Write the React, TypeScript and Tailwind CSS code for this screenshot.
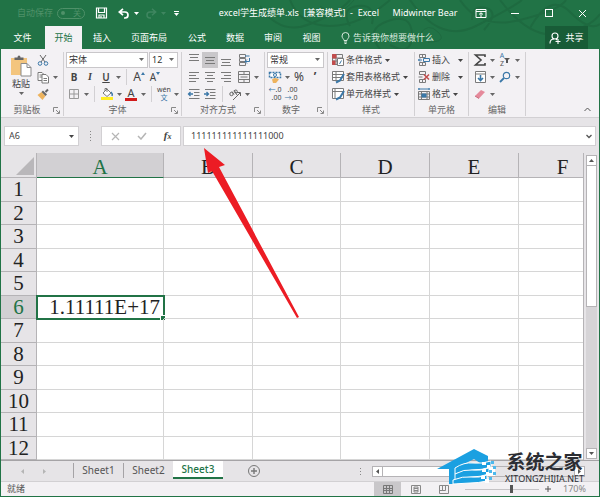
import React, { useState } from "react";

const menuTabs = [
  { label: "文件", width: "w-[45px]" },
  { label: "开始", width: "w-[37px]" },
  { label: "插入", width: "w-[40px]" },
  { label: "页面布局", width: "w-[54px]" },
  { label: "公式", width: "w-[42px]" },
  { label: "数据", width: "w-[34px]" },
  { label: "审阅", width: "w-[42px]" },
  { label: "视图", width: "w-[35px]" },
];

const columns = ["A", "B", "C", "D", "E", "F"];
const rows = Array.from({ length: 12 }, (_, i) => i + 1);
const cells: Record<string, string> = { A6: "1.11111E+17" };
const sheets = ["Sheet1", "Sheet2", "Sheet3"];

function Caret() {
  return (
    <svg width="5" height="3" viewBox="0 0 5 3" fill="currentColor" className="shrink-0">
      <path d="M0 0h5L2.5 3z" />
    </svg>
  );
}

function CaretCell() {
  return (
    <span className="flex w-2 shrink-0 items-center justify-center text-[#666]">
      <Caret />
    </span>
  );
}

function Divider() {
  return <span className="mx-1 h-4 w-px shrink-0 bg-[#d2d0d3]" />;
}

interface ToolProps {
  label: string;
  active?: boolean;
  children: React.ReactNode;
}

function Tool({ label, active, children }: ToolProps) {
  return (
    <button
      aria-label={label}
      className={`flex h-4 w-4 shrink-0 items-center justify-center ${active ? "bg-[#c9c7ca]" : ""}`}
    >
      {children}
    </button>
  );
}

function Icon({ children, color = "#7a7a7a" }: { children: React.ReactNode; color?: string }) {
  return (
    <svg width="14" height="14" viewBox="0 0 14 14" fill="none" stroke={color} strokeWidth="1" className="shrink-0">
      {children}
    </svg>
  );
}

function Picker({ label, value, className }: { label: string; value: string; className: string }) {
  return (
    <div className={`relative h-4 border border-[#c9c7ca] bg-white ${className}`}>
      <select
        aria-label={label}
        defaultValue={value}
        className="block h-full w-full appearance-none bg-transparent pl-[2px] text-[9px] leading-[14px] text-[#333] outline-none"
      >
        <option>{value}</option>
      </select>
      <span className="pointer-events-none absolute top-[5px] right-[3px] text-[#666]">
        <Caret />
      </span>
    </div>
  );
}

interface GroupProps {
  label: string;
  width: string;
  launcher?: boolean;
  children: React.ReactNode;
}

function Group({ label, width, launcher, children }: GroupProps) {
  return (
    <section className={`flex shrink-0 flex-col border-r border-[#d2d0d3] ${width}`}>
      <div className="flex-1">{children}</div>
      <div className="flex h-4 items-center">
        <span className="flex-1 text-center text-[9px] leading-4 text-[#666]">{label}</span>
        {launcher && (
          <button aria-label={`${label}设置`} className="mr-[2px] w-2">
            <svg width="7" height="7" viewBox="0 0 7 7" fill="none" stroke="#888">
              <path d="M.5 5V.5H5M3 3l3 3M6.5 3.5v3h-3" />
            </svg>
          </button>
        )}
      </div>
    </section>
  );
}

function TextTool({ label, icon, gap }: { label: string; icon: React.ReactNode; gap?: string }) {
  return (
    <button className="flex h-4 items-center text-[9px] leading-4 whitespace-nowrap text-[#444]">
      {icon}
      <span className={`ml-px ${gap ?? "mr-[3px]"}`}>{label}</span>
      <Caret />
    </button>
  );
}

function Lines({ y, widths }: { y: number; widths: [number, number][] }) {
  return (
    <Icon>
      {widths.map(([x, w], i) => (
        <path key={i} d={`M${x} ${y + i * 3 + 0.5}h${w}`} />
      ))}
    </Icon>
  );
}

function TitleBar() {
  return (
    <header className="flex h-[26px] shrink-0 items-center text-[9px] text-white">
      <label className="flex items-center pl-[17px] text-[#4f9169]">
        自动保存
        <input type="checkbox" className="peer sr-only" />
        <span className="ml-[4px] flex h-[11px] w-7 items-center justify-between rounded-full border border-[#4f9169] px-[3px] text-[8px] leading-[8px]">
          <span className="h-1 w-1 rounded-full bg-[#4f9169]" />
          关
        </span>
      </label>
      <button aria-label="保存" className="ml-[10px]">
        <svg width="13" height="12" viewBox="0 0 13 12" fill="none" stroke="currentColor" strokeWidth="1.2">
          <path d="M1.500 1h10v10h-10zM3.500 1v4.500h6V1M4 11V8h5v3M6 9v2" />
        </svg>
      </button>
      <button aria-label="撤销" className="ml-[10px] flex items-center gap-1">
        <svg width="12" height="11" viewBox="0 0 12 11" fill="none" stroke="currentColor" strokeWidth="1.7">
          <path d="M5 .8 1.3 4 5 7.2M1.5 4H7a3 3 0 0 1 0 6H6" />
        </svg>
        <Caret />
      </button>
      <button aria-label="恢复" className="ml-[6px] flex items-center gap-1 text-[#3f8660]">
        <svg width="12" height="11" viewBox="0 0 12 11" fill="none" stroke="currentColor" strokeWidth="1.5">
          <path d="M7 .8 10.7 4 7 7.2M10.5 4H5a3 3 0 0 0 0 6h1" />
        </svg>
        <Caret />
      </button>
      <button aria-label="自定义快速访问工具栏" className="ml-[8px] flex flex-col items-center gap-px">
        <span className="h-px w-[5px] bg-white" />
        <Caret />
      </button>
      <h1 className="flex-1 text-right whitespace-pre">excel学生成绩单.xls  [兼容模式]  -  Excel</h1>
      <span className="ml-[11px] w-[70px] text-center whitespace-nowrap">Midwinter Bear</span>
      <button aria-label="功能区显示选项" className="ml-[15px]">
        <svg width="12" height="9" viewBox="0 0 12 9" fill="none" stroke="currentColor">
          <path d="M1 .5h10v8H1zM1 2.5h10M6 8V4M4 5.5 6 3.7l2 1.8" />
        </svg>
      </button>
      <button aria-label="最小化" className="ml-6 h-px w-2 bg-white" />
      <button aria-label="最大化" className="ml-[26px] h-2 w-2 border border-white" />
      <button aria-label="关闭" className="mr-[13px] ml-[25px]">
        <svg width="9" height="9" viewBox="0 0 9 9" stroke="currentColor">
          <path d="m1 1 7 7M8 1 1 8" />
        </svg>
      </button>
    </header>
  );
}

function MenuBar() {
  return (
    <nav className="flex h-[23px] shrink-0 items-stretch text-[9px] text-white">
      {menuTabs.map((tab) => (
        <button
          key={tab.label}
          className={`shrink-0 whitespace-nowrap ${tab.width} ${
            tab.label === "开始" ? "bg-[#f3f1f4] text-[#217346]" : ""
          }`}
        >
          {tab.label}
        </button>
      ))}
      <button className="ml-3 flex items-center gap-[3px] whitespace-nowrap text-[#d9e9df]">
        <svg width="9" height="12" viewBox="0 0 9 12" fill="none" stroke="currentColor">
          <path d="M3 8.5C3 7 1 6.2 1 4a3.5 3.5 0 0 1 7 0C8 6.200 6 7 6 8.500zM3 10h3M3.500 11.500h2" />
        </svg>
        告诉我你想要做什么
      </button>
      <span className="flex-1" />
      <button className="mr-3 flex w-[43px] items-center justify-center gap-1 bg-[#185c37]">
        <svg width="12" height="12" viewBox="0 0 12 12" fill="none" stroke="currentColor" strokeWidth="1.1">
          <circle cx="6" cy="4" r="3" />
          <path d="M1 11.500C1 8.500 3 7 5 7M7 7l1 1M9 7v5M6.500 9.500h5" />
        </svg>
        共享
      </button>
    </nav>
  );
}

function Ribbon() {
  return (
    <div className="flex h-[69px] shrink-0 border-b border-[#d2d0d3] bg-[#f3f1f4] pt-[3px] pb-px">
      <Group label="剪贴板" width="w-[63px]" launcher>
        <div className="flex">
          <button className="ml-2 flex w-[24px] flex-col items-center text-[9px] leading-[13px] text-[#444]">
            <svg width="22" height="25" viewBox="0 0 22 25">
              <path d="M1 6h16v17H1z" fill="#f3c57e" />
              <path d="M4.500 8V5.500h3q0-2 1.500-2t1.500 2h3V8z" fill="#666" />
              <path d="M11 11.500h6l4 4v8.500H11z" fill="#fff" stroke="#8a8a8a" />
              <path d="M17 11.500v4h4" fill="none" stroke="#8a8a8a" />
            </svg>
            粘贴
            <span className="mt-[2px] text-[#666]">
              <Caret />
            </span>
          </button>
          <div className="ml-[2px] flex flex-col gap-px">
            <Tool label="剪切">
              <Icon color="#666">
                <path d="m4 2 5 7M10 2 5 9" />
                <circle cx="4" cy="10.500" r="1.800" stroke="#3b78a8" />
                <circle cx="10" cy="10.500" r="1.800" stroke="#3b78a8" />
              </Icon>
            </Tool>
            <div className="flex">
              <Tool label="复制">
                <Icon>
                  <path d="M2 2.500h4l2 2v6H2zM3.500 5h3M3.500 7h3" fill="#fff" />
                  <path d="M6 4.500h4l2.500 2.500v6H6zM7.500 8.500h3.500M7.500 10.500h3.500" fill="#fff" />
                </Icon>
              </Tool>
              <CaretCell />
            </div>
            <Tool label="格式刷">
              <Icon>
                <path d="m1.500 8 4-3 4 4-3 4z" fill="#edb35d" stroke="none" />
                <path d="m5.500 5 4 4 1.500-1.500-4-4z" fill="#666" stroke="none" />
                <path d="m9.500 5 2.500-2.500" stroke="#666" strokeWidth="2" />
              </Icon>
            </Tool>
          </div>
        </div>
      </Group>

      <Group label="字体" width="w-[118px]" launcher>
        <div className="flex flex-col gap-px pl-[2px]">
          <div className="flex gap-px">
            <Picker label="字体" value="宋体" className="w-[82px]" />
            <Picker label="字号" value="12" className="w-[29px]" />
          </div>
          <div className="flex text-[10px] leading-4 text-[#444]">
            <Tool label="加粗"><b>B</b></Tool>
            <Tool label="倾斜"><i className="font-['Liberation_Serif',serif] font-bold">I</i></Tool>
            <Tool label="下划线"><u className="font-semibold">U</u></Tool>
            <CaretCell />
            <Divider />
            <Tool label="增大字号">
              <span className="text-[12px]">A</span>
              <svg width="4" height="3" viewBox="0 0 4 3" className="mb-2" fill="#3b78a8"><path d="M0 3h4L2 0z" /></svg>
            </Tool>
            <Tool label="减小字号">
              <span>A</span>
              <svg width="4" height="3" viewBox="0 0 4 3" className="mb-2" fill="#3b78a8"><path d="M0 0h4L2 3z" /></svg>
            </Tool>
          </div>
          <div className="flex text-[#444]">
            <Tool label="边框">
              <Icon color="#999"><path d="M2.500 2.500h9v9h-9zM7 2.500v9M2.500 7h9" /></Icon>
            </Tool>
            <CaretCell />
            <Divider />
            <Tool label="填充颜色">
              <Icon>
                <path d="M1 10h12v3H1z" fill="#ffee22" stroke="none" />
                <path d="m3 6 4-4 4 4-4 3.500zM5 4V1.500h2V5" fill="#fff" />
                <path d="M11 5q2 2 1 4" stroke="#3b78a8" strokeWidth="1.500" />
              </Icon>
            </Tool>
            <CaretCell />
            <Tool label="字体颜色">
              <span className="flex w-3 flex-col items-center">
                <span className="text-[11px] leading-[11px]">A</span>
                <span className="h-[3px] w-3 bg-[#d11a1a]" />
              </span>
            </Tool>
            <CaretCell />
            <Divider />
            <Tool label="拼音">
              <span className="flex flex-col items-center text-[7px] leading-[8px]">
                <span className="h-2">wén</span>
                <span className="h-2 text-[#3b78a8]">文</span>
              </span>
            </Tool>
            <CaretCell />
          </div>
        </div>
      </Group>

      <Group label="对齐方式" width="w-[83px]" launcher>
        <div className="flex flex-col gap-px pl-1">
          <div className="flex">
            <Tool label="顶端对齐"><Lines y={1} widths={[[2, 10], [3, 8], [2, 10]]} /></Tool>
            <Tool label="垂直居中" active><Lines y={4} widths={[[2, 10], [3, 8], [2, 10]]} /></Tool>
            <Tool label="底端对齐"><Lines y={6} widths={[[2, 10], [3, 8], [2, 10]]} /></Tool>
            <span className="w-[2px]" />
            <Tool label="自动换行">
              <Icon>
                <path d="M2.500 1.500h6v3h-6zM2.500 5.500h6v3h-6zM2.500 9.500h6v3h-6z" />
                <path d="M8 3h4.500M12.500 5v3.500H8M10 6.500l-2 2 2 2" stroke="#3b78a8" />
              </Icon>
            </Tool>
          </div>
          <div className="flex">
            <Tool label="左对齐"><Lines y={2} widths={[[2, 10], [2, 7], [2, 10], [2, 7]]} /></Tool>
            <Tool label="居中"><Lines y={2} widths={[[2, 10], [4, 6], [2, 10], [4, 6]]} /></Tool>
            <Tool label="右对齐"><Lines y={2} widths={[[2, 10], [5, 7], [2, 10], [5, 7]]} /></Tool>
            <span className="w-[2px]" />
            <Tool label="合并后居中">
              <Icon><path d="M1.500 1.500h11v11h-11zM1.500 4.500h11M1.500 9.500h11M7 1.500v3M7 9.500v3M3.500 7h7" /></Icon>
            </Tool>
            <CaretCell />
          </div>
          <div className="flex">
            <Tool label="减少缩进量">
              <Icon>
                <path d="M2 2.500h10.500M7 5.500h5.500M7 8.500h5.500M2 11.500h10.500" />
                <path d="M6 7H1.500M3.500 5l-2 2 2 2" stroke="#3b78a8" strokeWidth="1.300" />
              </Icon>
            </Tool>
            <Tool label="增加缩进量">
              <Icon>
                <path d="M2 2.500h10.500M7 5.500h5.500M7 8.500h5.500M2 11.500h10.500" />
                <path d="M1 7h4.500M3.500 5l2 2-2 2" stroke="#3b78a8" strokeWidth="1.300" />
              </Icon>
            </Tool>
            <Divider />
            <Tool label="方向">
              <Icon color="#666">
                <circle cx="3.500" cy="7" r="1.700" />
                <path d="m4 4.500 2 3M6 3l3 5" />
                <circle cx="7.800" cy="4.500" r="1.500" />
                <path d="m5 13 7-7M12.500 9V5.500H9" />
              </Icon>
            </Tool>
            <CaretCell />
          </div>
        </div>
      </Group>

      <Group label="数字" width="w-[63px]" launcher>
        <div className="flex flex-col gap-px pl-[2px]">
          <Picker label="数字格式" value="常规" className="w-[57px]" />
          <div className="flex text-[12px] leading-4 text-[#444]">
            <Tool label="会计数字格式">
              <Icon color="#3b78a8">
                <path d="M1.500 2.500h11v5h-11z" fill="#fff" strokeDasharray="2 1" strokeWidth="1.500" />
                <circle cx="7" cy="5" r="1.500" />
                <path d="M4 9.500q3-3 7 0l-3 3.500H5z" fill="#edb35d" stroke="none" />
              </Icon>
            </Tool>
            <CaretCell />
            <Tool label="百分比样式">%</Tool>
            <Tool label="千位分隔样式"><b>’</b></Tool>
          </div>
          <div className="flex text-[7px] leading-[8px] text-[#444]">
            <Tool label="增加小数位数">
              <span className="flex flex-col items-end">
                <span className="flex h-2"><span className="text-[#3b78a8]">←</span>.0</span>
                <span className="h-2">.00</span>
              </span>
            </Tool>
            <Tool label="减少小数位数">
              <span className="flex flex-col items-end">
                <span className="h-2">.00</span>
                <span className="flex h-2"><span className="text-[#3b78a8]">→</span>.0</span>
              </span>
            </Tool>
          </div>
        </div>
      </Group>

      <Group label="样式" width="w-[87px]">
        <div className="flex flex-col items-start gap-px pl-[3px]">
          <TextTool
            label="条件格式"
            icon={
              <Icon>
                <path d="M1.500 1.500h10v10h-10zM1.500 5h10M1.500 8h10M5 1.500v10" />
                <path d="M1.500 1.500H5V5H1.500zM1.500 8H4v3.500H1.500z" fill="#c24c4c" stroke="#c24c4c" />
                <path d="M6.500 5.500h6v7h-6z" fill="#fff" />
                <path d="m8.500 11 2-3.500" stroke="#3b78a8" />
              </Icon>
            }
          />
          <TextTool
            label="套用表格格式"
            icon={
              <Icon>
                <path d="M1.500 1.500h11v9h-11zM1.500 4.500h11M1.500 7.500h11M5 1.500v9" fill="#fff" />
                <path d="m5 12.500 4-2L13 4" stroke="#3b78a8" strokeWidth="2" />
              </Icon>
            }
          />
          <TextTool
            label="单元格样式"
            icon={
              <Icon>
                <path d="M1.500 1.500h11v10h-11zM1.500 4.500h11M4 1.500v10" fill="#fff" />
                <path d="m5 12.500 4-2L13 4" stroke="#3b78a8" strokeWidth="2" />
              </Icon>
            }
          />
        </div>
      </Group>

      <Group label="单元格" width="w-[54px]">
        <div className="flex flex-col items-start gap-px pl-[2px]">
          <TextTool
            label="插入"
            gap="mr-2"
            icon={
              <Icon>
                <path d="M2.500 1.500h6v3h-6zM2.500 9.500h6v3h-6zM5.500 1.500v3M5.500 9.500v3" />
                <path d="M6.500 5.500h6v3h-6zM1 7h4M3 5.500 1.500 7 3 8.500" stroke="#3b78a8" />
              </Icon>
            }
          />
          <TextTool
            label="删除"
            gap="mr-2"
            icon={
              <Icon>
                <path d="M2.500 1.500h6v3h-6zM2.500 9.500h6v3h-6zM5.500 9.500v3M1.500 7h4" />
                <path d="m7 4.500 5 5M12 4.500l-5 5" stroke="#c24c4c" strokeWidth="1.500" />
              </Icon>
            }
          />
          <TextTool
            label="格式"
            icon={
              <Icon>
                <path d="M1.500 4.500h11v8h-11zM1.500 7h11M1.500 10h11M4.500 4.500v8M10 4.500v8" />
                <path d="M1 2h12M2 1v2M12 1v2" stroke="#3b78a8" />
                <path d="M5 7h4v3H5z" fill="#3b78a8" stroke="#3b78a8" />
              </Icon>
            }
          />
        </div>
      </Group>

      <Group label="编辑" width="w-[57px]">
        <div className="flex flex-col gap-px pl-[3px]">
          <div className="flex">
            <Tool label="自动求和">
              <Icon color="#444"><path d="M12 4V2H2.500L8 7l-5.500 5H12v-2" strokeWidth="1.600" /></Icon>
            </Tool>
            <CaretCell />
            <span className="w-px" />
            <Tool label="排序和筛选">
              <span className="flex items-center text-[7px] leading-[8px] text-[#555]">
                <span className="flex flex-col">
                  <span className="h-2 text-[#3b78a8]">A</span>
                  <span className="h-2">Z</span>
                </span>
                <svg width="6" height="6" viewBox="0 0 6 6" fill="#555"><path d="M0 1h6L4 3v3H2V3z" /></svg>
              </span>
            </Tool>
            <CaretCell />
          </div>
          <div className="flex">
            <Tool label="填充">
              <Icon>
                <path d="M2.500 1.500h10v11h-10zM2.500 4h10" fill="#fff" />
                <path d="M7.500 5v5.500M5 8l2.500 2.500L10 8" stroke="#3b78a8" strokeWidth="1.600" />
              </Icon>
            </Tool>
            <CaretCell />
            <span className="w-px" />
            <Tool label="查找和选择">
              <Icon color="#3b78a8">
                <circle cx="8.500" cy="5.500" r="3.200" strokeWidth="1.200" />
                <path d="m6 8-4 4" strokeWidth="1.800" />
              </Icon>
            </Tool>
            <CaretCell />
          </div>
          <div className="flex">
            <Tool label="清除">
              <Icon>
                <path d="m2 9 6-6 4 2-6 6.500z" fill="#e58a9b" stroke="none" />
                <path d="m2 9 4 2.500" stroke="#c96b7d" />
              </Icon>
            </Tool>
            <CaretCell />
          </div>
        </div>
      </Group>

      <span className="flex-1" />
      <button aria-label="折叠功能区" className="mr-2 mb-1 self-end">
        <svg width="7" height="5" viewBox="0 0 7 5" fill="none" stroke="#555">
          <path d="m.500 4 3-3 3 3" />
        </svg>
      </button>
    </div>
  );
}

function FormulaBar() {
  const [formula, setFormula] = useState("111111111111111000");

  return (
    <div className="flex h-[35px] shrink-0 items-start bg-[#e6e4e7] px-[3px] pt-2 text-[9px] text-[#444]">
      <div className="flex h-5 w-[75px] items-center border border-[#d2d0d3] bg-white pr-1">
        <input aria-label="名称框" defaultValue="A6" className="w-full min-w-0 bg-transparent pl-1 outline-none" />
        <Caret />
      </div>
      <div className="flex h-5 w-[22px] flex-col items-center justify-center gap-[2px]">
        <span className="h-px w-px bg-[#888]" />
        <span className="h-px w-px bg-[#888]" />
        <span className="h-px w-px bg-[#888]" />
        <span className="h-px w-px bg-[#888]" />
      </div>
      <div className="flex h-5 w-20 items-center justify-around border border-[#d2d0d3] bg-white">
        <button aria-label="取消">
          <svg width="9" height="9" viewBox="0 0 9 9" stroke="#b5b5b5" strokeWidth="1.200"><path d="m1 1 7 7M8 1 1 8" /></svg>
        </button>
        <button aria-label="输入">
          <svg width="10" height="8" viewBox="0 0 10 8" fill="none" stroke="#b5b5b5" strokeWidth="1.500"><path d="m1 4 3 3 5-6" /></svg>
        </button>
        <button aria-label="插入函数" className="font-['Liberation_Serif',serif] text-[11px] leading-4 font-bold italic">
          f<span className="text-[8px]">x</span>
        </button>
      </div>
      <div className="ml-[2px] flex h-5 min-w-0 flex-1 items-center border border-[#d2d0d3] bg-white pr-[3px]">
        <input
          aria-label="编辑栏"
          value={formula}
          onChange={(e) => setFormula(e.target.value)}
          className="min-w-0 flex-1 bg-transparent pl-[7px] outline-none"
        />
        <button aria-label="展开编辑栏">
          <svg width="6" height="5" viewBox="0 0 6 5" fill="none" stroke="#555" strokeWidth="1.300"><path d="m.5 1 2.500 2.500L5.500 1" /></svg>
        </button>
      </div>
    </div>
  );
}

function Grid() {
  return (
    <div className="min-w-0 flex-1 overflow-hidden border-r border-[#b5b3b6] bg-white">
      <table className="h-full w-full min-w-[606px] table-fixed border-separate border-spacing-0 font-['Liberation_Serif',serif] text-[21px] leading-[22px] text-[#222]">
        <colgroup>
          <col className="w-[36px]" />
          <col className="w-[127px]" />
          <col className="w-[89px]" />
          <col className="w-[88px]" />
          <col className="w-[89px]" />
          <col className="w-[89px]" />
          <col />
        </colgroup>
        <thead>
          <tr className="h-[25px] bg-[#e6e4e7]">
            <th className="border-r border-b border-[#b5b3b6] p-0">
              <svg width="18" height="18" viewBox="0 0 18 18" fill="#b9b7ba" className="mt-px mr-[2px] ml-auto"><path d="M18 0v18H0z" /></svg>
            </th>
            {columns.map((col) => (
              <th
                key={col}
                className={`border-r border-r-[#b5b3b6] p-0 pt-1 leading-5 font-normal ${
                  col === "A"
                    ? "border-b border-b-[#217346] bg-[#d2d0d3] text-[#217346]"
                    : "border-b border-b-[#b5b3b6]"
                }`}
              >
                {col}
              </th>
            ))}
          </tr>
        </thead>
        <tbody>
          {rows.map((row) => (
            <tr key={row}>
              <th
                className={`border-r border-b border-[#b5b3b6] p-0 font-normal ${
                  row === 6 ? "bg-[#d2d0d3] text-[#217346]" : "bg-[#e6e4e7]"
                }`}
              >
                {row}
              </th>
              {columns.map((col) => {
                const selected = col + row === "A6";
                return (
                  <td
                    key={col}
                    className={`relative border-r border-b border-[#d6d6d6] p-0 text-right ${
                      selected ? "pr-[3px] outline-2 -outline-offset-1 outline-[#217346]" : ""
                    }`}
                  >
                    {cells[col + row]}
                    {selected && (
                      <span className="absolute -right-[2px] -bottom-[2px] h-1 w-1 bg-[#217346] ring-1 ring-white" />
                    )}
                  </td>
                );
              })}
            </tr>
          ))}
        </tbody>
      </table>
    </div>
  );
}

function VerticalScroll() {
  return (
    <div className="flex w-[15px] shrink-0 flex-col items-center bg-[#e6e4e7] pt-[2px] pb-px">
      <button aria-label="向上滚动" className="flex h-[11px] w-[11px] items-center justify-center border border-[#b5b3b6] bg-white">
        <svg width="5" height="3" viewBox="0 0 5 3" fill="#555"><path d="M0 3h5L2.500 0z" /></svg>
      </button>
      <span className="h-[140px] w-[11px] border-x border-[#b5b3b6] bg-white" />
      <span className="w-[11px] flex-1 border-t border-[#b5b3b6] bg-[#d6d4d7]" />
      <button aria-label="向下滚动" className="flex h-[11px] w-[11px] items-center justify-center border border-[#b5b3b6] bg-white text-[#555]">
        <Caret />
      </button>
    </div>
  );
}

function SheetBar() {
  const [active, setActive] = useState("Sheet3");

  return (
    <div className="flex h-[21px] shrink-0 items-center border-t border-[#a5a3a6] bg-[#e6e4e7] text-[10px] text-[#555]">
      <div className="flex w-[72px] text-[#b5b5b5]">
        <button aria-label="上一个工作表" className="ml-[10px] flex w-[22px] justify-center">
          <svg width="3" height="5" viewBox="0 0 3 5" fill="currentColor"><path d="M3 0v5L0 2.500z" /></svg>
        </button>
        <button aria-label="下一个工作表" className="flex w-[22px] justify-center">
          <svg width="3" height="5" viewBox="0 0 3 5" fill="currentColor"><path d="M0 0v5l3-2.500z" /></svg>
        </button>
      </div>
      {sheets.map((sheet) => (
        <button
          key={sheet}
          onClick={() => setActive(sheet)}
          className={`mb-[2px] w-[50px] ${
            sheet === active
              ? "h-[18px] self-start border-b-2 border-[#217346] bg-white font-medium text-[#217346]"
              : "h-[15px] border-l border-[#a5a3a6]"
          }`}
        >
          {sheet}
        </button>
      ))}
      <button aria-label="新工作表" className="ml-[25px]">
        <svg width="12" height="12" viewBox="0 0 12 12" fill="none" stroke="#777">
          <circle cx="6" cy="6" r="5.500" />
          <path d="M6 3v6M3 6h6" strokeWidth="1.400" />
        </svg>
      </button>
      <span className="flex-1" />
      <div className="mr-[11px] flex flex-col gap-[2px]">
        <span className="h-px w-px bg-[#888]" />
        <span className="h-px w-px bg-[#888]" />
        <span className="h-px w-px bg-[#888]" />
      </div>
      <div className="mr-[14px] flex h-[11px] w-[213px] border border-[#b5b3b6] bg-[#d6d4d7] text-[#555]">
        <button aria-label="向左滚动" className="flex w-[10px] items-center justify-center border-r border-[#b5b3b6] bg-white">
          <svg width="3" height="5" viewBox="0 0 3 5" fill="currentColor"><path d="M3 0v5L0 2.500z" /></svg>
        </button>
        <span className="w-[112px] bg-white" />
        <span className="flex-1 bg-[#e6e4e7]" />
        <button aria-label="向右滚动" className="flex w-[10px] items-center justify-center border-l border-[#b5b3b6] bg-white">
          <svg width="3" height="5" viewBox="0 0 3 5" fill="currentColor"><path d="M0 0v5l3-2.500z" /></svg>
        </button>
      </div>
    </div>
  );
}

function StatusBar() {
  return (
    <footer className="flex h-[15px] shrink-0 items-center border-t border-[#d2d0d3] bg-[#f3f1f4] text-[9px] leading-[10px] text-[#555]">
      <span className="flex-1 pl-[6px]">就绪</span>
      <button aria-label="普通" className="flex h-full w-[27px] items-center justify-center bg-[#c9c7ca]">
        <svg width="10" height="9" viewBox="0 0 10 9" fill="none" stroke="#777"><path d="M.5.500h9v8h-9zM.5 3.500h9M.5 5.500h9M3.500.500v8M6.500.500v8" /></svg>
      </button>
      <button aria-label="页面布局" className="flex w-[29px] items-center justify-center">
        <svg width="10" height="9" viewBox="0 0 10 9" fill="none" stroke="#888"><path d="M.5.500h9v8h-9zM3 2h4v5H3zM3 3.500h4M3 5.500h4" /></svg>
      </button>
      <button aria-label="分页预览" className="flex w-[27px] items-center justify-center">
        <svg width="10" height="9" viewBox="0 0 10 9" fill="none" stroke="#888"><path d="M.5.500h9v8h-9zM3.500.500v5M.5 5.500h6M6.500.500v5" /></svg>
      </button>
      <input
        type="range"
        aria-label="缩放"
        min={10}
        max={400}
        defaultValue={255}
        className="mr-1 ml-2 h-px w-[74px] appearance-none bg-[#c5c3c6] [&::-webkit-slider-thumb]:h-2 [&::-webkit-slider-thumb]:w-[3px] [&::-webkit-slider-thumb]:appearance-none [&::-webkit-slider-thumb]:bg-[#555]"
      />
      <button aria-label="放大" className="flex w-[10px] justify-center">
        <svg width="6" height="6" viewBox="0 0 6 6" stroke="currentColor"><path d="M3 0v6M0 3h6" /></svg>
      </button>
      <span className="mr-[13px] ml-[10px] text-[#888]">170%</span>
    </footer>
  );
}

function SiteBadge() {
  return (
    <div className="pointer-events-none absolute right-4 bottom-3 flex items-center gap-2">
      <svg width="60" height="36" viewBox="0 0 60 36">
        <path d="M0 20 37 0l14 7v7h-8l-6-4-20 10z" fill="#1ba0e1" />
        <path d="M12 19h8v16h-8z" fill="#1ba0e1" />
        <path d="M18 19q9-6 18-5t18-2v6q-9 3-18 3t-18 4z" fill="#1ba0e1" stroke="#fff" />
        <path d="M18 25q9-5 17-4t17-2v6q-9 3-17 3t-17 3z" fill="#1ba0e1" stroke="#fff" />
        <path d="M16 31q10-4 18-3t16-2v6q-9 2-17 2l-17 1z" fill="#1ba0e1" stroke="#fff" />
        <path d="M45 13h4v3h-4zM50 16h3v3h-3zM45 20h4v3h-4zM49 23h3v3h-3zM44 27h4v3h-4zM48 30h4v4h-4z" fill="#fff" />
        <path d="M54 12h3v3h-3zM56 17h3v3h-3zM52 21h3v3h-3zM56 23h3v3h-3zM52 28h3v3h-3z" fill="#4db8ec" />
      </svg>
      <div className="flex flex-col items-center text-[#2b2d33]">
        <strong className="text-[19px] leading-[23px]">系统之家</strong>
        <span className="font-['Noto_Sans',sans-serif] text-[9px] leading-[10px] whitespace-nowrap">XITONGZHIJIA.NET</span>
      </div>
    </div>
  );
}

export default function App() {
  return (
    <main className="relative flex h-screen flex-col overflow-hidden bg-[#217346] font-['Noto_Sans','Noto_Sans_CJK_SC',sans-serif]">
      <svg
        className="pointer-events-none absolute top-0 right-0"
        width="340"
        height="49"
        viewBox="0 0 340 49"
        fill="none"
        stroke="#1e6a40"
        strokeWidth="2"
      >
        <path d="M0 6q20 30 50 18T90 0M30 0q10 26 40 26t60-26M90 26q-10-18 8-20t14 18M120 49q-16-20 8-28t24 14-22 10M150 0q30 44 66 26T262 0M200 0q20 30 60 20t46-20M212 20q0-16 14-12t-2 22M240 0q30 40 60 34t40-20M270 28q20-36 40-16t30 12" />
        <path d="M160 34q8-12 18-2t-10 10M60 6q18 14 34-6" strokeWidth="1" />
      </svg>
      <div className="relative flex shrink-0 flex-col">
        <TitleBar />
        <MenuBar />
      </div>
      <div className="flex min-h-0 flex-1 flex-col px-px pb-px">
        <Ribbon />
        <FormulaBar />
        <div className="flex min-h-0 flex-1">
          <Grid />
          <VerticalScroll />
        </div>
        <SheetBar />
        <StatusBar />
      </div>
      <svg className="pointer-events-none absolute top-[146px] left-[200px]" width="102" height="174" viewBox="0 0 102 174">
        <path d="M4 2 25 19l-6 2 80 150-2 1L12 25l-4 2z" fill="#ec1c24" />
      </svg>
      <SiteBadge />
    </main>
  );
}
